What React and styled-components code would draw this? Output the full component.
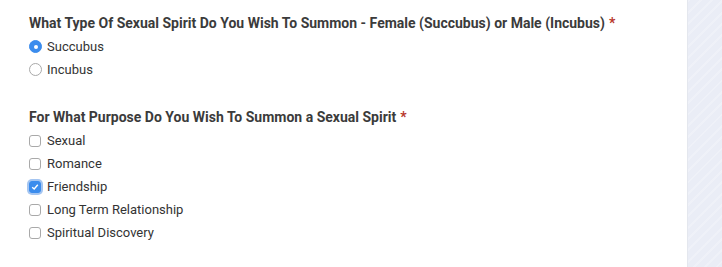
import React, { useState } from "react";
import styled, { createGlobalStyle } from "styled-components";

const GlobalStyle = createGlobalStyle`
  html, body {
    margin: 0;
    padding: 0;
    background: #fff;
  }
  body {
    font-family: Roboto, "Helvetica Neue", Arial, sans-serif;
    -webkit-font-smoothing: antialiased;
  }
`;

const Page = styled.div`
  display: flex;
  width: 722px;
  height: 267px;
  overflow: hidden;
`;

const Form = styled.div`
  flex: 1;
  padding: 15px 0 0 29px;
`;

const Sidebar = styled.div`
  width: 34px;
  border-left: 1px solid #e4e7ee;
  background-color: #eaedf6;
  background-image: repeating-linear-gradient(
    135deg,
    rgba(255, 255, 255, 0.22) 0,
    rgba(255, 255, 255, 0.22) 2px,
    transparent 2px,
    transparent 8px
  );
`;

const Group = styled.div`
  margin-bottom: 28px;
`;

const Question = styled.div`
  font-size: 14px;
  font-weight: 700;
  color: #3b3b3b;
  line-height: 16px;
  margin-bottom: 4px;
`;

const Required = styled.span`
  color: #b8362b;
  margin-left: 4px;
`;

const Option = styled.label`
  display: flex;
  align-items: center;
  height: 23px;
  font-size: 13px;
  color: #333;
  cursor: pointer;
`;

const Radio = styled.span`
  width: 13px;
  height: 13px;
  box-sizing: border-box;
  border-radius: 50%;
  margin-right: 5px;
  display: flex;
  align-items: center;
  justify-content: center;
  border: 1px solid ${(p) => (p.checked ? "#3b8ced" : "#a9a9a9")};
  background: ${(p) => (p.checked ? "#3b8ced" : "#fff")};

  &::after {
    content: "";
    width: 4px;
    height: 4px;
    border-radius: 50%;
    background: #fff;
    display: ${(p) => (p.checked ? "block" : "none")};
  }
`;

const Box = styled.span`
  width: 12px;
  height: 12px;
  box-sizing: border-box;
  border-radius: 3px;
  margin-right: 6px;
  display: flex;
  align-items: center;
  justify-content: center;
  border: 1px solid ${(p) => (p.checked ? "#3b8ced" : "#a9a9a9")};
  background: ${(p) => (p.checked ? "#3b8ced" : "#fff")};
  box-shadow: ${(p) => (p.checked ? "0 0 0 2px rgba(90, 150, 230, 0.55)" : "none")};
`;

const sexes = ["Succubus", "Incubus"];
const purposes = [
  "Sexual",
  "Romance",
  "Friendship",
  "Long Term Relationship",
  "Spiritual Discovery",
];

const App = () => {
  const [sex, setSex] = useState("Succubus");
  const [picked, setPicked] = useState(["Friendship"]);

  const toggle = (p) =>
    setPicked(picked.includes(p) ? picked.filter((x) => x !== p) : [...picked, p]);

  return (
    <Page>
      <GlobalStyle />
      <Form>
        <Group>
          <Question>
            What Type Of Sexual Spirit Do You Wish To Summon - Female (Succubus) or Male (Incubus)
            <Required>*</Required>
          </Question>
          {sexes.map((s) => (
            <Option key={s} onClick={() => setSex(s)}>
              <Radio checked={sex === s} />
              {s}
            </Option>
          ))}
        </Group>
        <Group>
          <Question>
            For What Purpose Do You Wish To Summon a Sexual Spirit
            <Required>*</Required>
          </Question>
          {purposes.map((p) => (
            <Option key={p} onClick={() => toggle(p)}>
              <Box checked={picked.includes(p)}>
                {picked.includes(p) && (
                  <svg width="8" height="8" viewBox="0 0 8 8">
                    <path d="M1.2 4.2 L3.2 6 L6.8 1.8" fill="none" stroke="#fff" strokeWidth="1.4" />
                  </svg>
                )}
              </Box>
              {p}
            </Option>
          ))}
        </Group>
      </Form>
      <Sidebar />
    </Page>
  );
};

export default App;
